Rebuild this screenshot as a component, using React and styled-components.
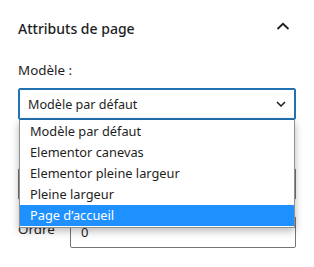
import React, { useState } from 'react'
import styled, { createGlobalStyle } from 'styled-components'

const GlobalStyle = createGlobalStyle`
  body {
    margin: 0;
    background: #fff;
    font-family: 'Noto Sans', 'Open Sans', sans-serif;
    color: #1e1e1e;
  }
`

const Panel = styled.div`
  width: 314px;
  box-sizing: border-box;
  border-bottom: 1px solid #e0e0e0;
  padding: 0 18px 19px 18px;
`

const TitleRow = styled.div`
  height: 56px;
  display: flex;
  align-items: center;
  justify-content: space-between;
  font-size: 14px;
  font-weight: 500;
`

const Chevron = styled.svg`
  width: 14px;
  height: 8px;
  margin-right: 6px;
  margin-top: -5px;
`

const Body = styled.div`
  display: flex;
  flex-direction: column;
`

const Label = styled.div`
  font-size: 13.4px;
  line-height: 20px;
  margin-bottom: 8px;
  margin-top: 4px;
  min-height: 20px;
`

const Field = styled.div`
  position: relative;
  margin-bottom: 16px;
`

const SelectBox = styled.div`
  height: 32px;
  box-sizing: border-box;
  border: 1px solid ${(p) => (p.$focused ? '#2271b1' : '#757575')};
  box-shadow: ${(p) => (p.$focused ? 'inset 0 0 0 1px #2271b1' : 'none')};
  border-radius: 2px;
  display: flex;
  align-items: center;
  justify-content: space-between;
  padding: 0 9px 0 9px;
  font-size: 12.6px;
`

const SmallChevron = styled.svg`
  width: 10px;
  height: 6px;
`

const Options = styled.ul`
  position: absolute;
  top: 32px;
  left: 1px;
  width: 276px;
  margin: 0;
  padding: 1px 0;
  list-style: none;
  background: #fff;
  border: 1px solid #8f8f8f;
  border-top: none;
  box-sizing: border-box;
  box-shadow: 0 3px 8px rgba(0, 0, 0, 0.28);
  z-index: 10;
`

const Option = styled.li`
  height: 21px;
  line-height: 21px;
  padding-left: 10px;
  font-size: 12.8px;
  background: ${(p) => (p.$active ? '#1e90ff' : '#fff')};
  color: ${(p) => (p.$active ? '#fff' : '#1e1e1e')};
`

const Row = styled.div`
  display: flex;
  align-items: flex-start;
`

const RowLabel = styled.div`
  width: 52px;
  font-size: 13.4px;
  padding-top: 4px;
`

const Input = styled.div`
  flex: 1;
  height: 32px;
  box-sizing: border-box;
  border: 1px solid #757575;
  border-radius: 2px;
  padding: 6px 10px;
  font-size: 13px;
`

const options = [
  'Modèle par défaut',
  'Elementor canevas',
  'Elementor pleine largeur',
  'Pleine largeur',
  'Page d’accueil',
]

export default function App() {
  const [active] = useState(4)
  return (
    <>
      <GlobalStyle />
      <Panel>
        <TitleRow>
          <span>Attributs de page</span>
          <Chevron viewBox="0 0 14 8">
            <path d="M1.5 7 L7 1.8 L12.5 7" fill="none" stroke="#1e1e1e" strokeWidth="1.8" />
          </Chevron>
        </TitleRow>
        <Body>
          <Label>Modèle :</Label>
          <Field>
            <SelectBox $focused>
              <span>Modèle par défaut</span>
              <SmallChevron viewBox="0 0 10 6">
                <path d="M1 1 L5 5 L9 1" fill="none" stroke="#1e1e1e" strokeWidth="1.5" />
              </SmallChevron>
            </SelectBox>
            <Options>
              {options.map((o, i) => (
                <Option key={o} $active={i === active}>
                  {o}
                </Option>
              ))}
            </Options>
          </Field>
          <Label />
          <Field>
            <SelectBox />
          </Field>
          <Row>
            <RowLabel>Ordre</RowLabel>
            <Input>0</Input>
          </Row>
        </Body>
      </Panel>
    </>
  )
}
